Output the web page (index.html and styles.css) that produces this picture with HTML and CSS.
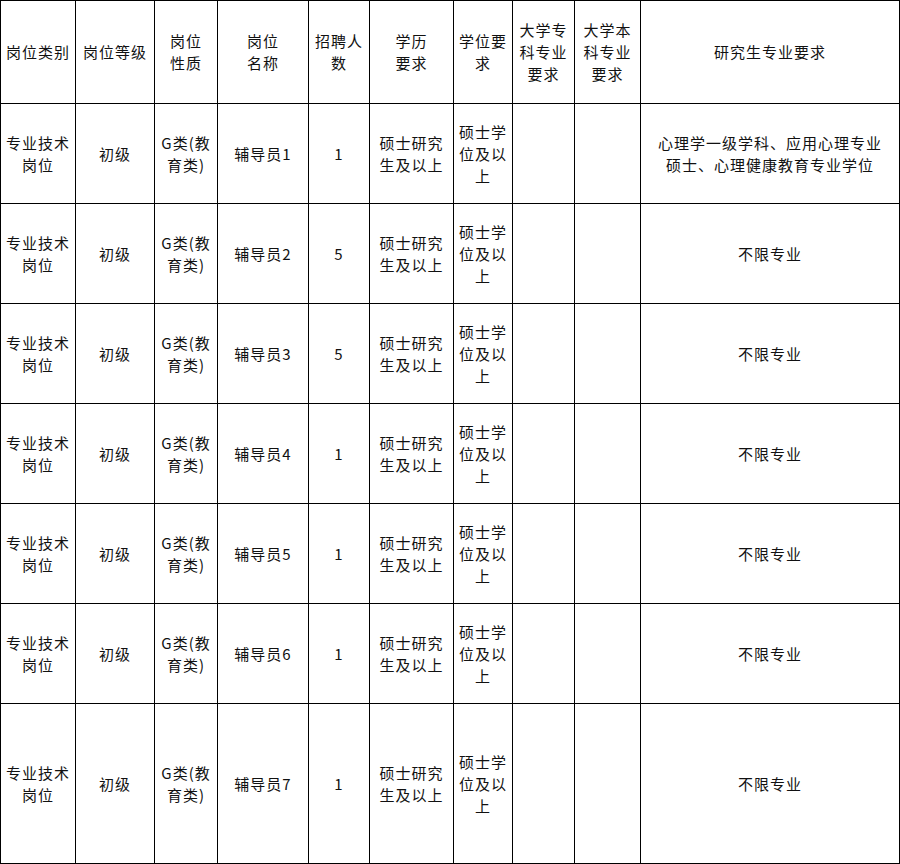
FILE: index.html
```html
<!DOCTYPE html>
<html lang="zh-CN">
<head>
<meta charset="utf-8">
<title>招聘岗位表</title>
<link rel="stylesheet" href="styles.css">
</head>
<body>
<table class="jobs">
  <colgroup>
    <col class="c1"><col class="c2"><col class="c3"><col class="c4"><col class="c5">
    <col class="c6"><col class="c7"><col class="c8"><col class="c9"><col class="c10">
  </colgroup>
  <tr class="head">
    <td>岗位类别</td>
    <td>岗位等级</td>
    <td>岗位<br>性质</td>
    <td>岗位<br>名称</td>
    <td>招聘人<br>数</td>
    <td>学历<br>要求</td>
    <td>学位要<br>求</td>
    <td>大学专<br>科专业<br>要求</td>
    <td>大学本<br>科专业<br>要求</td>
    <td>研究生专业要求</td>
  </tr>
  <tr class="row">
    <td>专业技术<br>岗位</td>
    <td>初级</td>
    <td>G类(教<br>育类)</td>
    <td>辅导员1</td>
    <td>1</td>
    <td>硕士研究<br>生及以上</td>
    <td>硕士学<br>位及以<br>上</td>
    <td></td>
    <td></td>
    <td>心理学一级学科、应用心理专业<br>硕士、心理健康教育专业学位</td>
  </tr>
  <tr class="row">
    <td>专业技术<br>岗位</td>
    <td>初级</td>
    <td>G类(教<br>育类)</td>
    <td>辅导员2</td>
    <td>5</td>
    <td>硕士研究<br>生及以上</td>
    <td>硕士学<br>位及以<br>上</td>
    <td></td>
    <td></td>
    <td>不限专业</td>
  </tr>
  <tr class="row">
    <td>专业技术<br>岗位</td>
    <td>初级</td>
    <td>G类(教<br>育类)</td>
    <td>辅导员3</td>
    <td>5</td>
    <td>硕士研究<br>生及以上</td>
    <td>硕士学<br>位及以<br>上</td>
    <td></td>
    <td></td>
    <td>不限专业</td>
  </tr>
  <tr class="row">
    <td>专业技术<br>岗位</td>
    <td>初级</td>
    <td>G类(教<br>育类)</td>
    <td>辅导员4</td>
    <td>1</td>
    <td>硕士研究<br>生及以上</td>
    <td>硕士学<br>位及以<br>上</td>
    <td></td>
    <td></td>
    <td>不限专业</td>
  </tr>
  <tr class="row">
    <td>专业技术<br>岗位</td>
    <td>初级</td>
    <td>G类(教<br>育类)</td>
    <td>辅导员5</td>
    <td>1</td>
    <td>硕士研究<br>生及以上</td>
    <td>硕士学<br>位及以<br>上</td>
    <td></td>
    <td></td>
    <td>不限专业</td>
  </tr>
  <tr class="row">
    <td>专业技术<br>岗位</td>
    <td>初级</td>
    <td>G类(教<br>育类)</td>
    <td>辅导员6</td>
    <td>1</td>
    <td>硕士研究<br>生及以上</td>
    <td>硕士学<br>位及以<br>上</td>
    <td></td>
    <td></td>
    <td>不限专业</td>
  </tr>
  <tr class="row last">
    <td>专业技术<br>岗位</td>
    <td>初级</td>
    <td>G类(教<br>育类)</td>
    <td>辅导员7</td>
    <td>1</td>
    <td>硕士研究<br>生及以上</td>
    <td>硕士学<br>位及以<br>上</td>
    <td></td>
    <td></td>
    <td>不限专业</td>
  </tr>
</table>
</body>
</html>
```
FILE: styles.css
```css
html, body {
  margin: 0;
  padding: 0;
  background: #ffffff;
}
.jobs {
  border-collapse: collapse;
  table-layout: fixed;
  width: 899px;
  font-family: "Noto Sans CJK SC", "Noto Sans", sans-serif;
  font-size: 15px;
  letter-spacing: 1px;
  line-height: 22px;
  color: #111111;
}
.jobs td {
  border: 1px solid #000000;
  padding: 0;
  text-align: center;
  vertical-align: middle;
  white-space: nowrap;
  overflow: hidden;
}
.c1 { width: 75px; }
.c2 { width: 79px; }
.c3 { width: 63px; }
.c4 { width: 91px; }
.c5 { width: 61px; }
.c6 { width: 84px; }
.c7 { width: 59px; }
.c8 { width: 62px; }
.c9 { width: 66px; }
.c10 { width: 259px; }
.head { height: 103px; }
.row { height: 100px; }
.row.last { height: 160px; }
```
